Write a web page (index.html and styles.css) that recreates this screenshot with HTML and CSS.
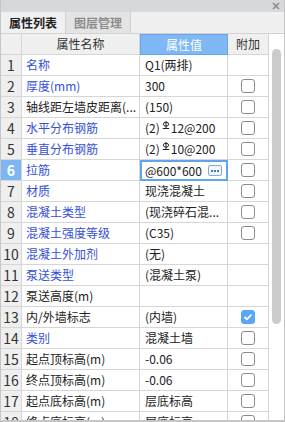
FILE: index.html
```html
<!DOCTYPE html>
<html lang="zh">
<head>
    <meta charset="UTF-8">
    <title>属性列表</title>
    <link rel="stylesheet" href="styles.css">
</head>
<body>
    <div class="panel">
        <div class="titlebar">
            <svg class="close" width="8" height="8" viewBox="0 0 8 8"><path d="M1 1L7 7M7 1L1 7" stroke="#8a8a8a" stroke-width="1.6"/></svg>
        </div>
        <div class="tabs">
            <div class="tab active">属性列表</div>
            <div class="tab">图层管理</div>
        </div>
        <div class="body">
            <div class="grid">
                <div class="row head">
                    <div class="c idx"></div><div class="c name">属性名称</div><div class="c val">属性值</div><div class="c add">附加</div>
                </div>
                <div class="row">
                    <div class="c idx">1</div><div class="c name link">名称</div><div class="c val">Q1(两排)</div><div class="c add"></div>
                </div>
                <div class="row">
                    <div class="c idx">2</div><div class="c name link">厚度(mm)</div><div class="c val">300</div><div class="c add"><span class="cb"></span></div>
                </div>
                <div class="row">
                    <div class="c idx">3</div><div class="c name">轴线距左墙皮距离(...</div><div class="c val">(150)</div><div class="c add"><span class="cb"></span></div>
                </div>
                <div class="row">
                    <div class="c idx">4</div><div class="c name link">水平分布钢筋</div>
                    <div class="c val">(2)<svg class="bar" width="8" height="8" viewBox="0 0 8 8"><ellipse cx="4" cy="3.2" rx="2.6" ry="2" fill="none" stroke="#222" stroke-width="1"/><path d="M4 0V7.5M0.8 7.5H7.2" stroke="#222" stroke-width="1"/></svg>12@200</div>
                    <div class="c add"><span class="cb"></span></div>
                </div>
                <div class="row">
                    <div class="c idx">5</div><div class="c name link">垂直分布钢筋</div>
                    <div class="c val">(2)<svg class="bar" width="8" height="8" viewBox="0 0 8 8"><ellipse cx="4" cy="3.2" rx="2.6" ry="2" fill="none" stroke="#222" stroke-width="1"/><path d="M4 0V7.5M0.8 7.5H7.2" stroke="#222" stroke-width="1"/></svg>10@200</div>
                    <div class="c add"><span class="cb"></span></div>
                </div>
                <div class="row sel">
                    <div class="c idx">6</div><div class="c name link">拉筋</div>
                    <div class="c val editing"><span>@600*600</span><span class="more"><i></i><i></i><i></i></span></div>
                    <div class="c add"><span class="cb"></span></div>
                </div>
                <div class="row">
                    <div class="c idx">7</div><div class="c name link">材质</div><div class="c val">现浇混凝土</div><div class="c add"><span class="cb"></span></div>
                </div>
                <div class="row">
                    <div class="c idx">8</div><div class="c name link">混凝土类型</div><div class="c val">(现浇碎石混...</div><div class="c add"><span class="cb"></span></div>
                </div>
                <div class="row">
                    <div class="c idx">9</div><div class="c name link">混凝土强度等级</div><div class="c val">(C35)</div><div class="c add"><span class="cb"></span></div>
                </div>
                <div class="row">
                    <div class="c idx">10</div><div class="c name link">混凝土外加剂</div><div class="c val">(无)</div><div class="c add"></div>
                </div>
                <div class="row">
                    <div class="c idx">11</div><div class="c name link">泵送类型</div><div class="c val">(混凝土泵)</div><div class="c add"></div>
                </div>
                <div class="row">
                    <div class="c idx">12</div><div class="c name">泵送高度(m)</div><div class="c val"></div><div class="c add"></div>
                </div>
                <div class="row">
                    <div class="c idx">13</div><div class="c name">内/外墙标志</div><div class="c val">(内墙)</div>
                    <div class="c add"><span class="cb on"><svg width="10" height="8" viewBox="0 0 10 8"><path d="M1.5 4L4 6.3L8.5 1.5" fill="none" stroke="#fff" stroke-width="1.8"/></svg></span></div>
                </div>
                <div class="row">
                    <div class="c idx">14</div><div class="c name link">类别</div><div class="c val">混凝土墙</div><div class="c add"><span class="cb"></span></div>
                </div>
                <div class="row">
                    <div class="c idx">15</div><div class="c name">起点顶标高(m)</div><div class="c val">-0.06</div><div class="c add"><span class="cb"></span></div>
                </div>
                <div class="row">
                    <div class="c idx">16</div><div class="c name">终点顶标高(m)</div><div class="c val">-0.06</div><div class="c add"><span class="cb"></span></div>
                </div>
                <div class="row">
                    <div class="c idx">17</div><div class="c name">起点底标高(m)</div><div class="c val">层底标高</div><div class="c add"><span class="cb"></span></div>
                </div>
                <div class="row">
                    <div class="c idx">18</div><div class="c name">终点底标高(m)</div><div class="c val">层底标高</div><div class="c add"><span class="cb"></span></div>
                </div>
            </div>
            <div class="scroll"><div class="thumb"></div></div>
        </div>
    </div>
</body>
</html>
```

FILE: styles.css
```css
body {
    margin: 0;
    font-family: "Noto Sans CJK SC", "Noto Sans", sans-serif;
    font-size: 12px;
    color: #222;
    background: #fff;
}
.panel {
    width: 285px;
    height: 422px;
    box-sizing: border-box;
    border-left: 1px solid #c6c6c6;
    border-right: 1px solid #c6c6c6;
    border-bottom: 2px solid #c6c6c6;
    background: #f0f0f0;
    display: flex;
    flex-direction: column;
    overflow: hidden;
}
.titlebar {
    height: 12px;
    flex: none;
    background: #d7d8dc;
    display: flex;
    justify-content: flex-end;
    align-items: center;
    padding-right: 4px;
}
.tabs {
    height: 22px;
    flex: none;
    display: flex;
    border-bottom: 1px solid #d2d2d2;
    box-sizing: border-box;
}
.tab {
    width: 65px;
    text-align: center;
    line-height: 21px;
    font-weight: bold;
    color: #8c8c8c;
    background: #e4e4e4;
    border-right: 1px solid #cfcfcf;
    box-sizing: border-box;
}
.tab.active {
    color: #222;
    background: #f0f0f0;
}
.body {
    flex: 1;
    min-height: 0;
    display: flex;
    background: #fff;
}
.grid {
    width: 268px;
    flex: none;
}
.row {
    display: grid;
    grid-template-columns: 21px 118px 88px 41px;
    height: 21px;
}
.c {
    box-sizing: border-box;
    border-right: 1px solid #d6d6d6;
    border-bottom: 1px solid #d6d6d6;
    line-height: 20px;
    white-space: nowrap;
    overflow: hidden;
    padding: 0 4px;
}
.name {
    padding-left: 4px;
}
.val {
    padding-left: 5px;
}
.idx {
    padding: 0;
    text-align: center;
    font-size: 14px;
    color: #333;
    background: #efefef;
}
.head .c {
    background: #f0f0f0;
    text-align: center;
    color: #333;
    padding: 0;
}
.head .val {
    background: #80b8f6;
    color: #fff;
    border: 1px solid #64a5ec;
    line-height: 19px;
}
.link {
    color: #3550d8;
}
.sel .idx {
    background: #7db6f3;
    color: #fff;
    font-weight: bold;
}
.editing {
    border: 2px solid #62a3ea;
    padding: 0 4px 0 3px;
    display: flex;
    justify-content: space-between;
    align-items: center;
    line-height: 17px;
}
.more {
    width: 14px;
    height: 11px;
    box-sizing: border-box;
    border: 1px solid #7eaee0;
    border-radius: 2px;
    background: #f4f8fd;
    display: flex;
    justify-content: center;
    align-items: center;
    gap: 1px;
}
.more i {
    width: 2px;
    height: 2px;
    background: #4a78b8;
}
.bar {
    vertical-align: 4px;
    margin: 0 1px 0 2px;
}
.add {
    display: flex;
    justify-content: center;
    align-items: center;
    padding: 0;
}
.cb {
    width: 14px;
    height: 14px;
    box-sizing: border-box;
    border: 1px solid #8c8c8c;
    border-radius: 3px;
    background: #fff;
    display: flex;
    justify-content: center;
    align-items: center;
}
.cb.on {
    background: #5aa5f5;
    border-color: #5aa5f5;
}
.scroll {
    width: 15px;
    flex: none;
}
.thumb {
    width: 9px;
    height: 275px;
    margin: 15px 0 0 3px;
    border-radius: 4.5px;
    background: #cbcbcb;
}
```
